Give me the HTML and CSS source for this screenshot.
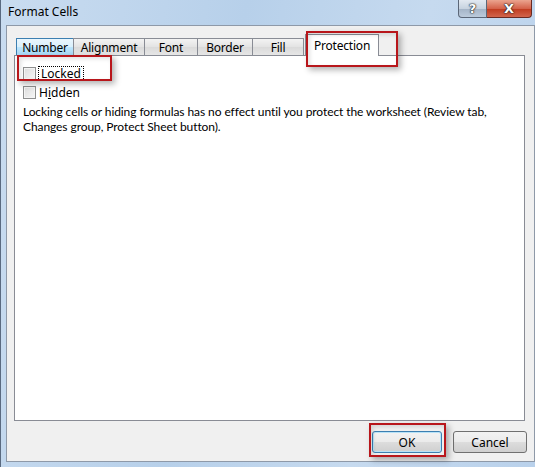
FILE: index.html
```html
<!DOCTYPE html>
<html lang="en">
<head>
    <meta charset="UTF-8">
    <title>Format Cells</title>
    <link rel="stylesheet" href="styles.css">
</head>
<body>
    <div class="window">
        <div class="titlebar">
            <span class="title">Format Cells</span>
            <div class="caption-buttons">
                <span class="cap-btn help">?</span>
                <span class="cap-btn close">X</span>
            </div>
        </div>

        <div class="client">
            <div class="tabs">
                <span class="tab" style="width:57px">Number</span>
                <span class="tab" style="width:71px">Alignment</span>
                <span class="tab" style="width:53px">Font</span>
                <span class="tab" style="width:55px">Border</span>
                <span class="tab" style="width:52px">Fill</span>
                <span class="tab active" style="width:74px">Protection</span>
            </div>

            <div class="panel">
                <label class="check-row">
                    <span class="checkbox"></span>
                    <span class="focus"><u>L</u>ocked</span>
                </label>
                <label class="check-row">
                    <span class="checkbox"></span>
                    <span>H<u>i</u>dden</span>
                </label>
                <p class="note">Locking cells or hiding formulas has no effect until you protect the worksheet (Review tab,<br>Changes group, Protect Sheet button).</p>
            </div>

            <div class="buttons">
                <button class="btn default">OK</button>
                <button class="btn">Cancel</button>
            </div>
        </div>

        <!-- red annotation boxes -->
        <div class="mark mark-locked"></div>
        <div class="mark mark-tab"></div>
        <div class="mark mark-ok"></div>
    </div>
</body>
</html>
```

FILE: styles.css
```css
body { margin: 0; font-family: "Noto Sans", "Open Sans", sans-serif; font-size: 12px; color: #000; }

.window { position: relative; width: 535px; height: 467px; overflow: hidden; background: linear-gradient(100deg, #c9dcf0 0%, #b7d0ea 40%, #c6daef 70%, #b9d1eb 100%); border-left: 1px solid #5a6a80; box-sizing: border-box; }

.titlebar { height: 25px; display: flex; align-items: center; padding-left: 7px; position: relative; }
.title { font-size: 12px; color: #000; margin-top: -2px; }
.caption-buttons { position: absolute; top: 0; left: 457px; display: flex; }
.cap-btn { height: 18px; display: flex; align-items: center; justify-content: center; font-family: "DejaVu Sans", sans-serif; font-weight: bold; color: #fff; box-sizing: border-box; border: 1px solid #5b6778; border-top: none; text-shadow: 0 0 1px #222, 0 0 1px #222, 0 0 2px #222; }
.help { width: 29px; font-size: 13px; border-radius: 0 0 0 4px; background: linear-gradient(#e2e9f1, #c7d3e0 50%, #a3b3c6 51%, #bccbdc); }
.close { width: 45px; font-size: 13px; border-left: none; border-color: #6a2a22; border-radius: 0 0 4px 0; background: linear-gradient(#eba48f, #d4624a 50%, #bf3a1e 51%, #d2654c); }

.client { margin-left: 5px; width: 529px; height: 437px; box-sizing: border-box; border: 1px solid #8e99a8; background: #f0f0f0; padding: 7px 0 0 7px; }

.tabs { display: flex; align-items: flex-end; padding-left: 2px; height: 22px; position: relative; z-index: 1; }
.tab { height: 17px; box-sizing: border-box; border: 1px solid #898c95; border-right: none; border-bottom: none; background: linear-gradient(#f3f3f3, #e3e3e3 50%, #dadada 51%, #e6e6e6); display: flex; align-items: center; justify-content: center; font-size: 12px; letter-spacing: -0.2px; }
.tab:nth-child(5) { border-right: 1px solid #898c95; }
.tab:first-child { background: linear-gradient(#eaf6fd, #d9f0fc 50%, #bee6fd 51%, #a7d9f5); border-color: #3c7fb1; }
.tab.active { height: 22px; margin-left: 1px; background: #fff; border-right: 1px solid #898c95; align-items: flex-start; padding-top: 2px; margin-bottom: -1px; }

.panel { width: 511px; height: 366px; box-sizing: border-box; border: 1px solid #898c95; background: #fff; padding: 8px 8px 0 8px; }
.check-row { display: flex; align-items: center; height: 19px; }
.checkbox { width: 13px; height: 13px; box-sizing: border-box; border: 1px solid #8e8f8f; background: linear-gradient(135deg, #dcdcdc, #f6f6f6); box-shadow: inset 0 0 0 1px #f4f4f4; margin-right: 3px; }
.focus { outline: 1px dotted #000; padding: 0 2px; line-height: 13px; }
.note { margin: 2px 0 0 0; font-family: Lato, "Noto Sans", sans-serif; font-size: 12px; letter-spacing: -0.08px; line-height: 15px; white-space: nowrap; }

.buttons { display: flex; justify-content: flex-end; gap: 11px; padding-right: 7px; margin-top: 10px; }
.btn { height: 22px; font-family: "Noto Sans", "Open Sans", sans-serif; font-size: 12px; padding: 0; border: 1px solid #707070; border-radius: 3px; background: linear-gradient(#f2f2f2, #ebebeb 50%, #dddddd 51%, #cfcfcf); }
.btn.default { width: 70px; border-color: #3c7fb1; box-shadow: inset 0 0 0 1px #b8e2f7; }
.btn:last-child { width: 74px; }

.mark { position: absolute; border: 2px solid #b8161b; box-shadow: 3px 3px 6px rgba(0, 0, 0, 0.3), inset 2px 2px 4px rgba(0, 0, 0, 0.12); z-index: 2; }
.mark-locked { left: 16px; top: 55px; width: 91px; height: 22px; }
.mark-tab { left: 305px; top: 31px; width: 88px; height: 32px; }
.mark-ok { left: 368px; top: 423px; width: 73px; height: 30px; }
```
